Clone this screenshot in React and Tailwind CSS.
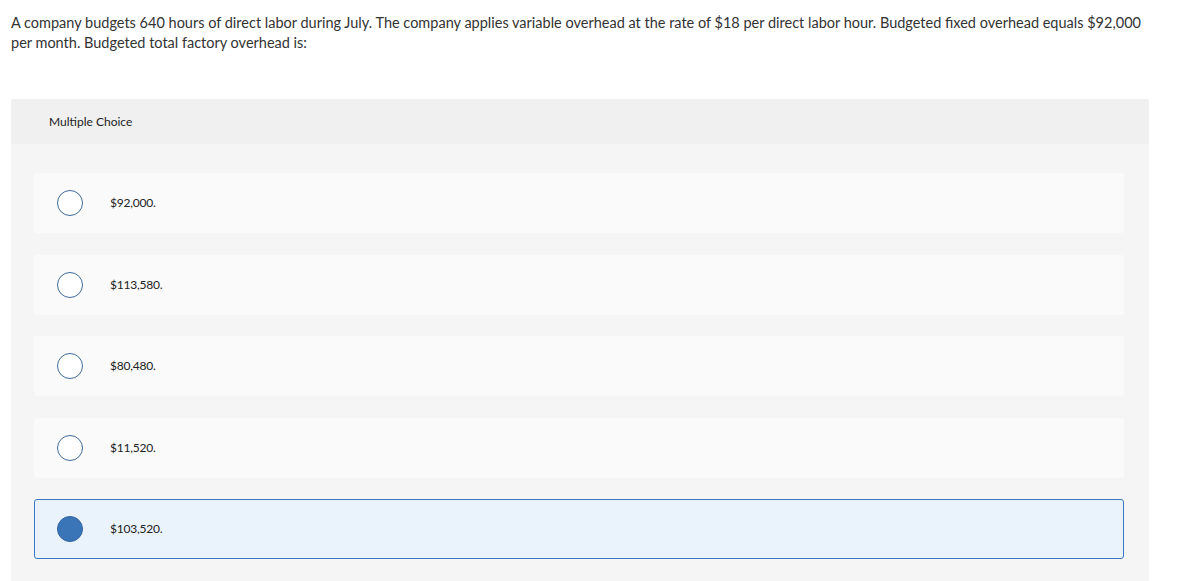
import React from "react";

const options = ["$92,000.", "$113,580.", "$80,480.", "$11,520.", "$103,520."];

export default function App() {
  return (
    <div className="w-[1180px] h-[581px] overflow-hidden bg-white text-[#333]" style={{ fontFamily: "Lato, 'Liberation Sans', sans-serif" }}>
      <div className="pl-[11px] pr-[35px] pt-[13px] text-[14.5px] leading-[20px] text-[#333]">
        A company budgets 640 hours of direct labor during July. The company applies variable overhead at the rate of $18 per direct labor hour. Budgeted fixed overhead equals $92,000 per month. Budgeted total factory overhead is:
      </div>
      <div className="ml-[11px] mt-[46px] w-[1138px] rounded-t-[3px] overflow-hidden">
        <div className="h-[45px] bg-[#f0f0f0] pl-[38px] flex items-center text-[12px] text-[#222]">Multiple Choice</div>
        <div className="bg-[#f5f5f5] px-[23px] pt-[29px] pb-[22px] flex flex-col gap-[21.5px]">
          {options.map((o, i) => {
            const sel = i === 4;
            return (
              <div
                key={o}
                className={
                  "h-[60px] w-[1090px] rounded-[3px] flex items-center pl-[22px] " +
                  (sel ? "bg-[#eaf2fb] border border-[#3a77c0]" : "bg-[#fafafa] border border-transparent")
                }
              >
                <div
                  className={
                    "w-[26px] h-[26px] rounded-full border " +
                    (sel ? "bg-[#3a75b8] border-[#2f62a0]" : "bg-white border-[#3e6a9a]")
                  }
                />
                <div className="ml-[27px] text-[12px] tracking-[-0.2px] text-[#222]">{o}</div>
              </div>
            );
          })}
        </div>
      </div>
    </div>
  );
}
